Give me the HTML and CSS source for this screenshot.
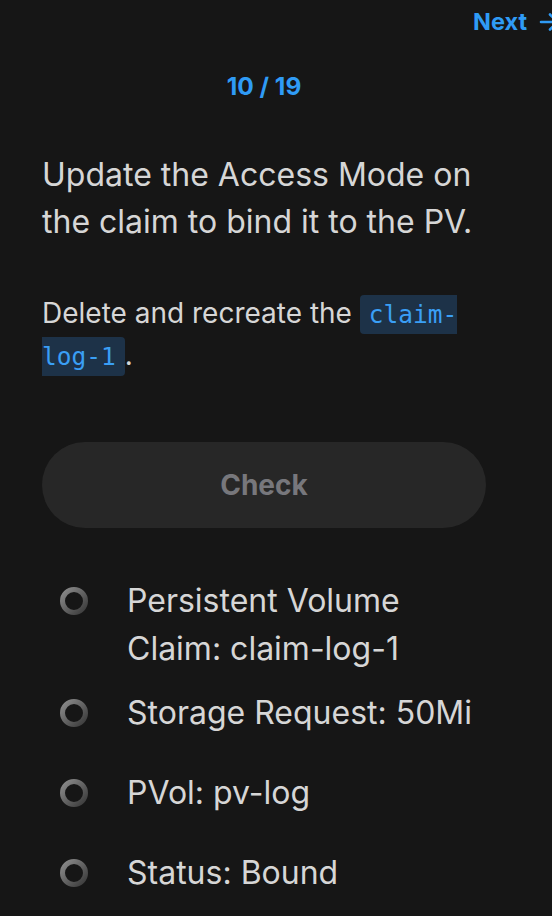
FILE: index.html
```html
<!DOCTYPE html>
<html lang="en">
<head>
<meta charset="utf-8">
<title>Step 10 / 19</title>
<link rel="stylesheet" href="styles.css">
</head>
<body>
<div class="page">
  <header class="top">
    <a class="next" href="#">Next
      <svg class="next-arrow" width="22" height="20" viewBox="0 0 22 20" aria-hidden="true">
        <path d="M2 10H19M11 2.5L18.5 10L11 17.5" fill="none" stroke="#2f9bf5" stroke-width="2.6" stroke-linecap="round" stroke-linejoin="round"/>
      </svg>
    </a>
  </header>
  <main class="content">
    <div class="counter">10 / 19</div>
    <h1 class="title">Update the Access Mode on the claim to bind it to the PV.</h1>
    <p class="desc">Delete and recreate the <code class="code">claim-log-1</code>.</p>
    <button class="check" type="button">Check</button>
    <ul class="checks">
      <li class="item item-wrap"><svg class="ring" width="28" height="28" viewBox="0 0 28 28" aria-hidden="true"><defs><linearGradient id="rg" x1="0" y1="0" x2="1" y2="1"><stop offset="0" stop-color="#8c8c8c"/><stop offset="1" stop-color="#3a3a3a"/></linearGradient></defs><circle cx="14" cy="14" r="11.5" fill="none" stroke="url(#rg)" stroke-width="5"/></svg><span class="label">Persistent Volume Claim: claim-log-1</span></li>
      <li class="item"><svg class="ring" width="28" height="28" viewBox="0 0 28 28" aria-hidden="true"><circle cx="14" cy="14" r="11.5" fill="none" stroke="url(#rg)" stroke-width="5"/></svg><span class="label">Storage Request: 50Mi</span></li>
      <li class="item"><svg class="ring" width="28" height="28" viewBox="0 0 28 28" aria-hidden="true"><circle cx="14" cy="14" r="11.5" fill="none" stroke="url(#rg)" stroke-width="5"/></svg><span class="label">PVol: pv-log</span></li>
      <li class="item"><svg class="ring" width="28" height="28" viewBox="0 0 28 28" aria-hidden="true"><circle cx="14" cy="14" r="11.5" fill="none" stroke="url(#rg)" stroke-width="5"/></svg><span class="label">Status: Bound</span></li>
    </ul>
  </main>
</div>
</body>
</html>
```

FILE: styles.css
```css
html, body {
  margin: 0;
  padding: 0;
  background: #161616;
  overflow: hidden;
}

body {
  font-family: Inter, "Noto Sans", "Liberation Sans", sans-serif;
  color: #d6d6d6;
}

.page {
  width: 552px;
  overflow: hidden;
}

.top {
  height: 44px;
  display: flex;
  justify-content: flex-end;
  align-items: center;
  margin-right: -9px;
}

.next {
  display: flex;
  align-items: center;
  gap: 12px;
  color: #2f9bf5;
  font-weight: 700;
  font-size: 23.5px;
  line-height: 44px;
  text-decoration: none;
}

.next-arrow {
  display: block;
}

.content {
  width: 444px;
  margin-left: 42px;
  display: flex;
  flex-direction: column;
}

.counter {
  margin-top: 27px;
  text-align: center;
  color: #2f9bf5;
  font-weight: 700;
  font-size: 24.5px;
  line-height: 30px;
}

.title {
  margin: 50px 0 0;
  font-size: 32px;
  font-weight: 400;
  line-height: 47px;
  color: #d6d6d6;
}

.desc {
  margin: 47px 0 0;
  font-size: 28px;
  line-height: 42px;
  color: #d6d6d6;
}

.code {
  font-family: "DejaVu Sans Mono", "Liberation Mono", monospace;
  font-size: 24.5px;
  line-height: 1;
  color: #3a9ff5;
  background: #1d3248;
  border-radius: 4px;
  padding: 5px 9px;
}

.check {
  margin-top: 66px;
  height: 86px;
  width: 100%;
  border: 0;
  border-radius: 43px;
  background: #272727;
  color: #77777c;
  font-family: inherit;
  font-size: 28px;
  font-weight: 700;
  cursor: default;
}

.checks {
  list-style: none;
  margin: 33px 0 0;
  padding: 0;
}

.item {
  display: flex;
  align-items: flex-start;
  gap: 39px;
  padding: 16px 0 16px 18px;
  font-size: 32px;
  line-height: 48px;
}

.item-wrap {
  padding-bottom: 0;
}

.ring {
  flex: none;
  margin-top: 10px;
  display: block;
}
```
